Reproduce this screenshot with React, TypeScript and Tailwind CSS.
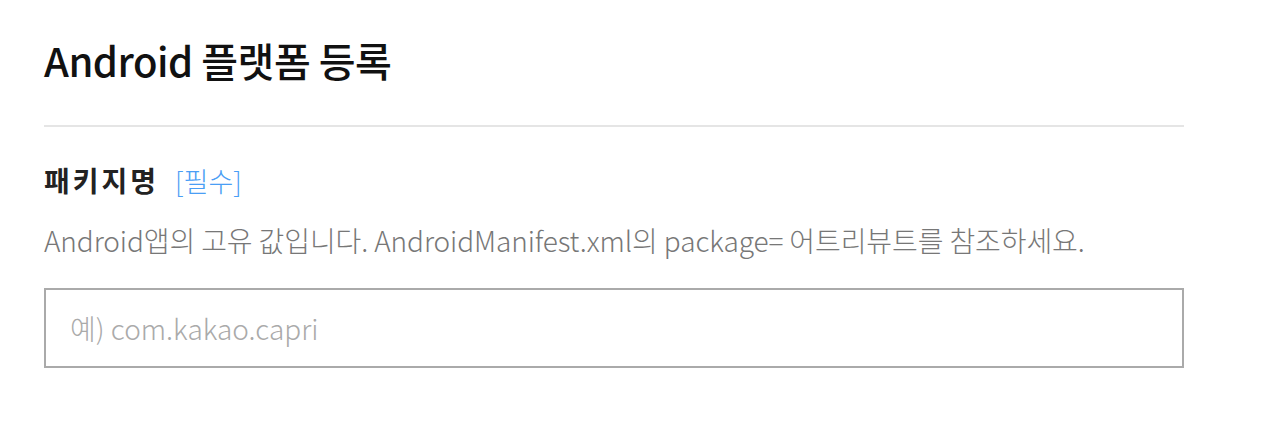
export default function App() {
  return (
    <div
      className="w-[1264px] h-[422px] bg-white pl-[44px] pt-[34px]"
      style={{ fontFamily: '"Noto Sans CJK KR", "Noto Sans", sans-serif' }}
    >
      <div className="w-[1140px]">
        <div className="pb-[39px] border-b-2 border-[#e5e5e5]">
          <h2 className="text-[40px] leading-[52px] font-medium text-[#111] tracking-[-0.5px]">
            Android 플랫폼 등록
          </h2>
        </div>
        <div className="mt-[35px] flex items-baseline gap-[16px]">
          <span className="text-[28px] leading-[36px] font-bold text-[#222] tracking-[3px]">패키지명</span>
          <span className="text-[27px] leading-[36px] font-light text-[#4a9ef5]">[필수]</span>
        </div>
        <p className="mt-[23px] text-[28px] leading-[36px] font-light text-[#777] tracking-[-0.1px]">
          Android앱의 고유 값입니다. AndroidManifest.xml의 package= 어트리뷰트를 참조하세요.
        </p>
        <input
          className="mt-[30px] block w-full h-[80px] border-2 border-[#aaa] px-[24px] text-[28px] font-light outline-none placeholder:text-[#aaa]"
          placeholder="예) com.kakao.capri"
        />
      </div>
    </div>
  );
}
